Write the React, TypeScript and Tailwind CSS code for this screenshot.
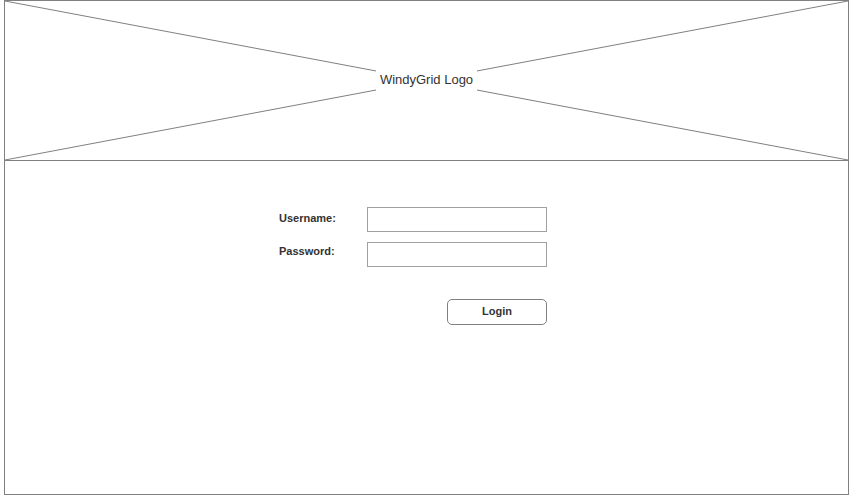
export default function App() {
  return (
    <div className="w-[854px] h-[499px] bg-white font-['Liberation_Sans',Arial,sans-serif] text-[#333]">
      <div className="ml-[4px] w-[845px] h-[495px] border border-[#808080] flex flex-col">
        <div className="relative h-[160px] border-b border-[#808080] flex items-center justify-center">
          <svg className="absolute inset-0 w-full h-full" viewBox="0 0 843 159" preserveAspectRatio="none">
            <line x1="0" y1="0" x2="843" y2="159" stroke="#808080" strokeWidth="1" />
            <line x1="0" y1="159" x2="843" y2="0" stroke="#808080" strokeWidth="1" />
          </svg>
          <span className="relative bg-white px-[4px] py-[6px] text-[13px] leading-none mt-[-3px]">WindyGrid Logo</span>
        </div>

        <div className="pl-[274px] pt-[46px] flex flex-col gap-[10px]">
          <div className="flex items-center">
            <label className="w-[88px] text-[11px] font-bold mt-[-3px]">Username:</label>
            <input type="text" className="w-[180px] h-[25px] border border-[#a0a0a0] bg-white outline-none" />
          </div>
          <div className="flex items-center">
            <label className="w-[88px] text-[11px] font-bold mt-[-7px]">Password:</label>
            <input type="password" className="w-[180px] h-[25px] border border-[#a0a0a0] bg-white outline-none" />
          </div>
          <div className="flex pl-[168px] pt-[22px]">
            <button className="w-[100px] h-[26px] border border-[#808080] rounded-[5px] bg-white text-[11px] font-bold pb-[2px]">
              Login
            </button>
          </div>
        </div>
      </div>
    </div>
  );
}
